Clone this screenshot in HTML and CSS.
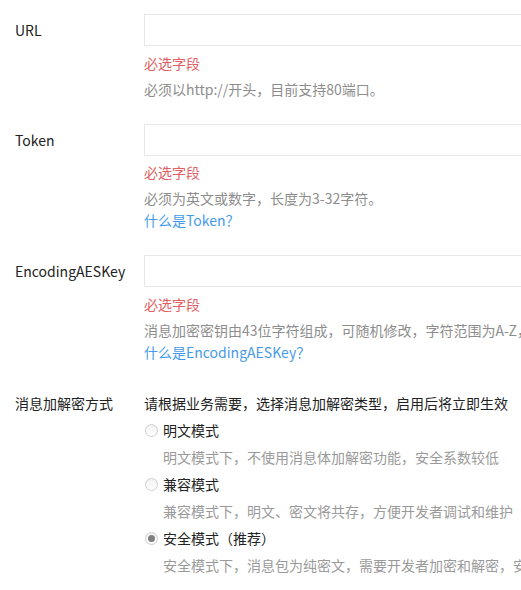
FILE: index.html
```html
<!DOCTYPE html>
<html lang="zh-CN">
<head>
<meta charset="utf-8">
<title>服务器配置</title>
<link rel="stylesheet" href="styles.css">
</head>
<body>
<form class="form">
  <div class="row">
    <label class="label">URL</label>
    <div class="field">
      <div class="input"></div>
      <p class="error">必选字段</p>
      <p class="help">必须以http://开头，目前支持80端口。</p>
    </div>
  </div>
  <div class="row">
    <label class="label">Token</label>
    <div class="field">
      <div class="input"></div>
      <p class="error">必选字段</p>
      <p class="help">必须为英文或数字，长度为3-32字符。</p>
      <a class="link">什么是Token？</a>
    </div>
  </div>
  <div class="row">
    <label class="label">EncodingAESKey</label>
    <div class="field">
      <div class="input"></div>
      <p class="error">必选字段</p>
      <p class="help">消息加密密钥由43位字符组成，可随机修改，字符范围为A-Z，a-z，0-9。</p>
      <a class="link">什么是EncodingAESKey？</a>
    </div>
  </div>
  <div class="row row-mode">
    <label class="label label-mode">消息加解密方式</label>
    <div class="field">
      <p class="intro">请根据业务需要，选择消息加解密类型，启用后将立即生效</p>
      <div class="option">
        <span class="radio"></span><span class="option-name">明文模式</span>
      </div>
      <p class="option-desc">明文模式下，不使用消息体加解密功能，安全系数较低</p>
      <div class="option">
        <span class="radio"></span><span class="option-name">兼容模式</span>
      </div>
      <p class="option-desc">兼容模式下，明文、密文将共存，方便开发者调试和维护</p>
      <div class="option">
        <span class="radio radio-checked"></span><span class="option-name">安全模式（推荐）</span>
      </div>
      <p class="option-desc">安全模式下，消息包为纯密文，需要开发者加密和解密，安全系数高</p>
    </div>
  </div>
</form>
</body>
</html>
```
FILE: styles.css
```css
html, body {
  margin: 0;
  padding: 0;
  background: #fff;
  overflow: hidden;
}
body {
  font-family: "Noto Sans CJK SC", "Microsoft YaHei", sans-serif;
  font-size: 14px;
  color: #222;
  padding: 14px 0 0 15px;
}
p { margin: 0; }
.form { display: block; }
.row {
  display: flex;
  margin-bottom: 24px;
  white-space: nowrap;
}
.label {
  width: 129px;
  flex: none;
  line-height: 32px;
  color: #222;
}
.field {
  flex: none;
  width: 500px;
}
.input {
  width: 420px;
  height: 32px;
  box-sizing: border-box;
  border: 1px solid #e7e7eb;
  background: #fff;
}
.error {
  margin-top: 5.5px;
  line-height: 22px;
  color: #e15f63;
}
.help {
  margin-top: 4px;
  line-height: 22px;
  color: #8d8d8d;
}
.link {
  display: block;
  line-height: 22px;
  color: #459ae9;
  text-decoration: none;
}
.row-mode {
  padding-top: 3.5px;
}
.label-mode,
.intro,
.option,
.option-desc {
  line-height: 27px;
}
.intro { color: #222; }
.option {
  display: flex;
  align-items: center;
}
.radio {
  width: 13px;
  height: 13px;
  box-sizing: border-box;
  border: 1px solid #cfcfcf;
  border-radius: 50%;
  background: linear-gradient(#f2f2f2, #fff);
  margin-left: 1px;
  margin-right: 5px;
  display: flex;
  align-items: center;
  justify-content: center;
}
.radio-checked::after {
  content: "";
  width: 7px;
  height: 7px;
  border-radius: 50%;
  background: #7f7f7f;
}
.option-name { color: #222; }
.option-desc {
  padding-left: 19px;
  color: #9a9a9a;
}
```
